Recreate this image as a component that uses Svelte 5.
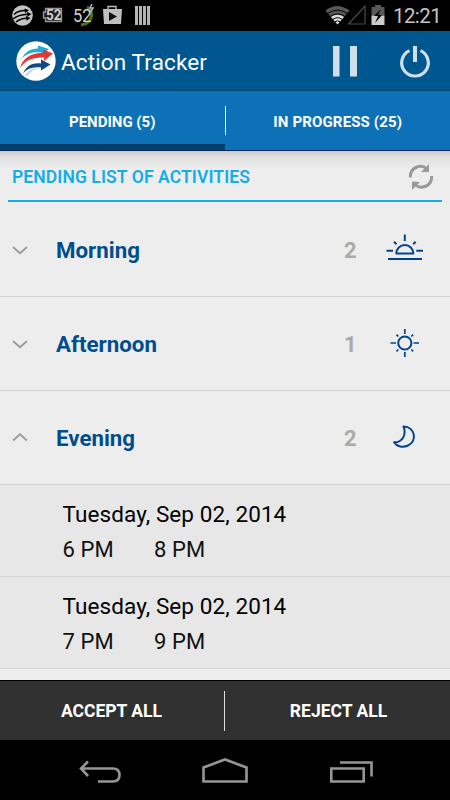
<script>
  const groups = [
    { name: 'Morning', count: 2, icon: 'sunrise', open: false },
    { name: 'Afternoon', count: 1, icon: 'sun', open: false },
    { name: 'Evening', count: 2, icon: 'moon', open: true }
  ];
  const slots = [
    { date: 'Tuesday, Sep 02, 2014', from: '6 PM', to: '8 PM' },
    { date: 'Tuesday, Sep 02, 2014', from: '7 PM', to: '9 PM' }
  ];
</script>

<div class="screen">
  <div class="status">
    <svg class="status-left" width="160" height="31" viewBox="0 0 160 31">
      <circle cx="22.500" cy="15.500" r="10.300" fill="#c4c4c4" />
      <g fill="none" stroke="#000" stroke-width="1.500">
        <path d="M14 14.500Q18 10.500 25 10.500" /><path d="M13 19Q18 14.500 28 14.200" /><path d="M16 22Q20 18.500 27 18.200" />
      </g>
      <path d="M24.500 8.500l4.500 1.800-4 3zM27 12l4.500 2-4 2.800zM26 16l4.500 2-4 2.800z" fill="#000" />
      <path d="M45.500 8.500H61.500V21.500H45.500V18H43.500V12H45.500Z" fill="#222" stroke="#999" stroke-width="1.300" />
      <text x="46" y="20.300" font-size="14.500" font-weight="700" fill="#d0d0d0" textLength="15.500" lengthAdjust="spacingAndGlyphs">52</text>
      <path d="M87 7Q92 10 91.500 16Q90 24 81 25" fill="none" stroke="#477c0b" stroke-width="3" />
      <text x="73" y="22" font-size="18.500" fill="#d4d4d4" textLength="18.500" lengthAdjust="spacingAndGlyphs">52</text>
      <path d="M92 4l-2 4h3l-3 5" fill="none" stroke="#b5b5b5" stroke-width="1.500" />
      <path d="M108 9V6.500H116V9" fill="none" stroke="#bbb" stroke-width="1.400" />
      <path d="M103 9H122L121 24H104Z" fill="#bfbfbf" /><path d="M109 12v9l8-4.500z" fill="#111" />
      <path d="M135 6h3v19h-3zM139 6h3v19h-3zM143 6h3v19h-3zM147 6h3v19h-3z" fill="#b5b5b5" />
    </svg>
    <div class="status-right">
      <svg width="62" height="31" viewBox="0 0 62 31">
        <path d="M0.500 10.500Q12 1.500 24.500 10.500L12.500 24.500Z" fill="#585858" />
        <path d="M6 17Q12.500 12.700 19 17L12.500 24.500Z" fill="#ddd" />
        <g fill="none" stroke="#000" stroke-width="1"><path d="M3 13.300Q12.500 7 22 13.300M5.500 16.300Q12.500 11.500 19.500 16.300M8 19.300Q12.500 16 17 19.300M10 21.700Q12.500 20 15 21.700" /></g>
        <path d="M23.500 24H40V6Z" fill="none" stroke="#4b4b4b" stroke-width="1.200" />
        <path d="M46.500 7H50V5H56V7H59.500V15.500H46.500Z" fill="#585858" /><path d="M46.500 15.500h13V25h-13z" fill="#ccc" />
        <path d="M56 9l-7 7h4l-3 7 7-8h-4z" fill="#000" />
      </svg>
      <span class="clock">12:21</span>
    </div>
  </div>

  <header>
    <svg class="logo" width="40" height="42" viewBox="0 0 40 42">
      <circle cx="20" cy="21" r="19.700" fill="#fff" />
      <path d="M5 20C9 12 14 8.500 22 8.500V5.500L33 9 25.500 15V12.500C16 11.500 9 14 5 20Z" fill="#24acd9" />
      <path d="M4 28.500C6 18 16 12.500 27 13V9.500L37 13.500 28 21V17.500C17 17 8 20.500 4 28.500Z" fill="#e93535" />
      <path d="M7 33.500C11 25 17 22.500 25 23.500V19.500L34.500 24.500 25 30.500V27.500C17 26.500 11 28.500 7 33.500Z" fill="#124982" />
      <path d="M9 35C13 29.500 18 27.500 24 28.500C18 29.500 13 32 11 37Z" fill="#bddced" />
    </svg>
    <h1>Action Tracker</h1>
    <svg class="actions" width="100" height="32" viewBox="0 0 100 32">
      <path d="M1 0h6.500v30.500H1zM18 0h7v30.500h-7z" fill="#cde0ec" />
      <path d="M77.500 4.600A13.300 13.300 0 1 0 88.500 4.600" fill="none" stroke="#cde0ec" stroke-width="3.200" />
      <path d="M81 0h4v16h-4z" fill="#cde0ec" />
    </svg>
  </header>

  <nav class="tabs">
    <div class="tab active"><span>PENDING (5)</span></div>
    <i></i>
    <div class="tab"><span class="progress">IN PROGRESS (25)</span></div>
  </nav>

  <main>
    <div class="section">
      <h2>PENDING LIST OF ACTIVITIES</h2>
      <svg width="26" height="28" viewBox="0 0 26 28">
        <g fill="none" stroke="#999" stroke-width="3"><path d="M2.300 14.500C2 4 13 0.500 19 6" /><path d="M23.700 13C24 23.500 13 27 7 21.500" /></g>
        <path d="M21 1V9H13ZM4 27V18.500L12 19Z" fill="#999" />
      </svg>
    </div>

    {#each groups as group}
      <div class="group">
        <svg class="chevron" width="16" height="10" viewBox="0 0 16 10">
          <path d={group.open ? 'M1 7.500L8 1.300L15 7.500' : 'M1 2L8 8.200L15 2'} fill="none" stroke="#999" stroke-width="1.800" />
        </svg>
        <h3>{group.name}</h3>
        <b>{group.count}</b>
        <svg class="symbol" width="40" height="40" viewBox="0 0 40 40" fill="none" stroke="#004489" stroke-width="2">
          {#if group.icon === 'sunrise'}
            <path d="M11.300 23.500A8.500 8.500 0 0 1 28.300 23.500Z" stroke-linejoin="round" />
            <path d="M19.800 4.500V11M1.500 20.700H8M31.300 20.700H38M9 11.700L11.500 14.300M30.700 11.700L28.200 14.300" />
            <path d="M3 29H37" />
          {:else if group.icon === 'sun'}
            <circle cx="19.800" cy="19" r="6.600" />
            <path d="M19.800 5V10M19.800 28V33M5.500 19H11M28.500 19H34M11.500 10.700L13.300 12.500M28.100 10.700L26.300 12.500M11.500 27.300L13.300 25.500M28.100 27.300L26.300 25.500" stroke-width="1.700" />
          {:else}
            <path d="M18.500 8.500C31 9 32 24 23 27.500C18 30 11.500 28.500 9 24.300C17 24.500 22 17 18.500 8.500Z" stroke-linejoin="round" />
          {/if}
        </svg>
      </div>
    {/each}

    {#each slots as slot}
      <div class="slot">
        <div class="date">{slot.date}</div>
        <div class="times"><span>{slot.from}</span><span>{slot.to}</span></div>
      </div>
    {/each}
  </main>

  <footer>
    <button class="accept">ACCEPT ALL</button><i></i><button class="reject">REJECT ALL</button>
  </footer>
  <div class="system">
    <svg width="450" height="60" viewBox="0 0 450 60" fill="none" stroke="#969696" stroke-width="2.600">
      <path d="M88 21.500L81 28.500L88 36M81 28.500H113Q119.500 28.500 119.500 35T113 41.500H98" />
      <path d="M203.500 41.500V27.500L225 19.500L246.500 27.500V41.500Z" />
      <path d="M331.300 28.500H363.700V41.500H331.300ZM340 22.500H371.500V36.500" />
    </svg>
  </div>
</div>

<style>
  :global(body) { margin: 0; }
  * { box-sizing: border-box; }
  .screen { width: 450px; height: 800px; overflow: hidden; display: flex; flex-direction: column; font-family: Roboto, sans-serif; background: #ededed; }
  svg { display: block; flex: none; }
  h1, h2, h3 { margin: 0; white-space: nowrap; }
  .status { height: 31px; flex: none; background: #000; display: flex; justify-content: space-between; }
  .status-right { display: flex; width: 125px; }
  .clock { font-size: 20.500px; line-height: 32px; color: #c4c4c4; margin-left: 6px; letter-spacing: -.6px; white-space: nowrap; }
  header { height: 60px; flex: none; background: #00568f; border-bottom: 1px solid #004777; display: flex; align-items: center; padding-left: 16px; }
  h1 { font-size: 22.500px; font-weight: 400; color: #fff; margin: 3px auto 0 5px; letter-spacing: .13px; }
  .actions { margin: 3px 18px 0 0; }
  .tabs { height: 60px; flex: none; background: #0d71b7; display: flex; align-items: stretch; border-bottom: 1px solid #00265f; }
  .tab { flex: 1; display: flex; align-items: center; justify-content: center; color: #fff; font-size: 15px; font-weight: 700; padding-top: 2px; }
  .tab.active { box-shadow: inset 0 -6px #013d68; }
  .progress { letter-spacing: .15px; }
  .tabs i { width: 1px; height: 29px; background: #fff; margin-top: 15px; }
  main { flex: 1; min-height: 0; background: linear-gradient(#c9c9c9, #e0e0e0 6px, #ededed 18px); }
  .section { height: 51px; margin: 0 8px 1px; padding: 0 8px 0 4px; border-bottom: 2px solid #13aee5; display: flex; align-items: center; justify-content: space-between; }
  h2 { font-size: 17.500px; font-weight: 600; color: #13aee5; margin-top: 3px; letter-spacing: .1px; }
  .section svg { margin-top: 2px; }
  .group { height: 94px; border-bottom: 1px solid #d2d2d2; display: flex; align-items: center; padding: 1px 25px 0 12px; }
  h3 { width: 288px; margin: 0 0 0 28px; font-size: 22.300px; line-height: 30px; font-weight: 700; color: #004d8c; }
  .group b { color: #aaa; font-size: 22px; width: 16px; }
  .symbol { margin-left: 25px; }
  .slot { height: 92px; background: #e7e7e7; border-bottom: 1px solid #d5d5d5; padding: 14px 0 0 62.500px; color: #000; font-size: 22px; line-height: 30px; white-space: nowrap; }
  .date { font-size: 22.500px; letter-spacing: .09px; }
  .times { display: flex; margin-top: 6px; color: #111; letter-spacing: .1px; }
  .times span { width: 91.500px; }
  footer { height: 60px; flex: none; background: #303030; border-top: 1px solid #000; display: flex; align-items: center; }
  button { flex: 1; background: none; border: 0; padding: 0; color: #fff; font: 700 17.500px Roboto, sans-serif; white-space: nowrap; }
  button.accept { flex: none; width: 224px; padding-right: 1px; }
  button.reject { padding-left: 2px; }
  footer i { width: 1px; height: 40px; background: #ddd; }
  .system { height: 60px; flex: none; background: #000; }
</style>
